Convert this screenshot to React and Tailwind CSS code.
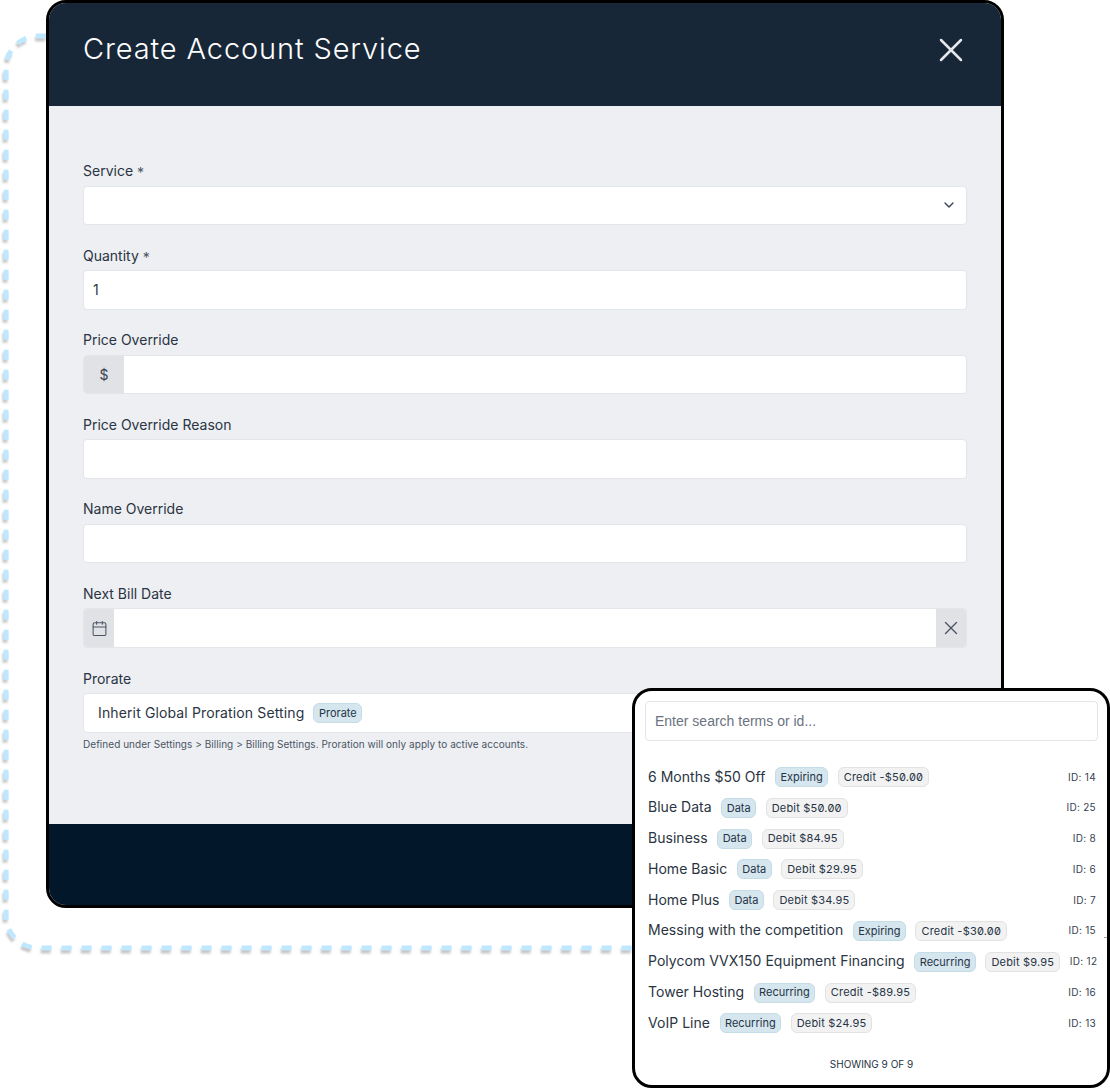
import { Calendar, ChevronDown, X } from 'lucide-react';

const inter = { fontFamily: 'Inter, sans-serif' };

const services = [
  { name: '6 Months $50 Off', type: 'Expiring', amount: 'Credit -$50.00', id: 14 },
  { name: 'Blue Data', type: 'Data', amount: 'Debit $50.00', id: 25 },
  { name: 'Business', type: 'Data', amount: 'Debit $84.95', id: 8 },
  { name: 'Home Basic', type: 'Data', amount: 'Debit $29.95', id: 6 },
  { name: 'Home Plus', type: 'Data', amount: 'Debit $34.95', id: 7 },
  { name: 'Messing with the competition', type: 'Expiring', amount: 'Credit -$30.00', id: 15 },
  { name: 'Polycom VVX150 Equipment Financing', type: 'Recurring', amount: 'Debit $9.95', id: 12 },
  { name: 'Tower Hosting', type: 'Recurring', amount: 'Credit -$89.95', id: 16 },
  { name: 'VoIP Line', type: 'Recurring', amount: 'Debit $24.95', id: 13 },
];

const Field = ({ label, required, children }) => (
  <div className="mb-[20.5px]">
    <label className="block h-[20px] mb-[4.5px] text-[14px] leading-[20px] text-[#2a3442]">
      {label}
      {required && <span className="inline-block ml-1 translate-y-[2px] text-[#4b5563]">*</span>}
    </label>
    {children}
  </div>
);

const inputBox = 'h-[39.6px] rounded-[4px] border border-[#e2e5ea] bg-white';

const TypeBadge = ({ children }) => (
  <span className="h-[20px] px-[4.5px] flex items-center whitespace-nowrap rounded-[6px] border border-[#c5dce8] bg-[#d5e6ef] text-[11px] text-[#263445]">
    {children}
  </span>
);

const AmountBadge = ({ children }) => (
  <span className="h-[20px] px-[5px] flex items-center whitespace-nowrap rounded-[6px] border border-[#e2e2e2] bg-[#f2f2f2] text-[11px] tracking-[0.2px] slashed-zero text-[#263445]">
    {children}
  </span>
);

const App = () => {
  return (
    <div className="relative w-[1110px] h-[1088px] overflow-hidden bg-white" style={inter}>
      {/* dashed connector behind the modal */}
      <svg className="absolute left-0 top-0 drop-shadow-[-1px_3px_1px_rgba(0,0,0,0.22)]" width="1110" height="1088" fill="none">
        <path
          d="M46 36 H38 A32 32 0 0 0 6 68 V916 A32 32 0 0 0 38 948 H640"
          stroke="#bde8ff"
          strokeWidth="5"
          strokeDasharray="10 10"
        />
      </svg>

      {/* modal */}
      <div className="relative ml-[46px] w-[958px] h-[908px] flex flex-col overflow-hidden rounded-[20px] border-[3px] border-black bg-[#edeff3]">
        <div className="h-[103px] shrink-0 flex justify-between pl-[34px] pr-[30px] pt-[28px] bg-[#172738]">
          <h2 className="text-[29px] leading-[36px] font-light tracking-[0.87px] text-white">Create Account Service</h2>
          <X className="-mt-[1px] text-[#e5e7eb]" size={40} strokeWidth={1.5} />
        </div>

        <div className="flex-1 pl-[34px] pr-[34px] pt-[55px]">
          <Field label="Service" required>
            <div className={`${inputBox} flex items-center justify-end pr-[9px]`}>
              <ChevronDown className="text-[#374151]" size={16} strokeWidth={2} />
            </div>
          </Field>
          <Field label="Quantity" required>
            <div className={`${inputBox} flex items-center px-[9px] text-[14px] text-[#2a3442]`}>1</div>
          </Field>
          <Field label="Price Override">
            <div className={`${inputBox} flex overflow-hidden`}>
              <div className="w-[40px] flex items-center justify-center bg-[#e0e2e6] text-[14px] text-[#374151]">$</div>
            </div>
          </Field>
          <Field label="Price Override Reason">
            <div className={inputBox} />
          </Field>
          <Field label="Name Override">
            <div className={inputBox} />
          </Field>
          <Field label="Next Bill Date">
            <div className={`${inputBox} flex overflow-hidden`}>
              <div className="w-[30px] flex items-center justify-center bg-[#e0e2e6]">
                <Calendar className="text-[#4b5563]" size={17} strokeWidth={1.5} />
              </div>
              <div className="flex-1" />
              <div className="w-[30px] flex items-center justify-center bg-[#e0e2e6]">
                <X className="text-[#4b5563]" size={22} strokeWidth={1.5} />
              </div>
            </div>
          </Field>
          <div>
            <label className="block h-[20px] mb-[4.5px] text-[14px] leading-[20px] text-[#2a3442]">Prorate</label>
            <div className={`${inputBox} flex items-center gap-[9px] pl-[14px]`}>
              <span className="text-[14px] tracking-[0.13px] text-[#2a3442]">Inherit Global Proration Setting</span>
              <TypeBadge>Prorate</TypeBadge>
            </div>
            <p className="mt-[4px] text-[10px] leading-[14px] tracking-[0.04px] text-[#4b5563]">
              Defined under Settings &gt; Billing &gt; Billing Settings. Proration will only apply to active accounts.
            </p>
          </div>
        </div>

        <div className="h-[81px] shrink-0 bg-[#02172a]" />
      </div>

      {/* search popup overlapping the modal */}
      <div className="absolute left-[632px] top-[688px] w-[478px] h-[400px] flex flex-col rounded-[20px] border-[3px] border-black bg-white pl-[10px] pr-[9px] pt-[10px]">
        <div
          className="h-[40px] shrink-0 flex items-center px-[9px] rounded-[4px] border border-[#e2e5ea] text-[14px] text-[#6b7280]"
          style={{ fontFamily: '"Liberation Sans", sans-serif' }}
        >
          Enter search terms or id...
        </div>
        <div className="mt-[26px] flex flex-col gap-[10.8px] pl-[3px] pr-[2px]">
          {services.map((s) => (
            <div key={s.id} className="h-[20px] flex items-center gap-[9.5px] whitespace-nowrap">
              <span className="mb-[2px] text-[14px] tracking-[0.03px] text-[#2a3442]">{s.name}</span>
              <TypeBadge>{s.type}</TypeBadge>
              <AmountBadge>{s.amount}</AmountBadge>
              <span className="ml-auto text-[10px] tracking-[0.3px] text-[#374151]">ID: {s.id}</span>
            </div>
          ))}
        </div>
        <p className="mt-[24px] text-center text-[10px] leading-[14px] text-[#263445]">SHOWING 9 OF 9</p>
        <div className="absolute left-[469px] top-[246px] w-[3px] h-[1px] bg-[#9ca3af]" />
      </div>
    </div>
  );
};

export default App;
